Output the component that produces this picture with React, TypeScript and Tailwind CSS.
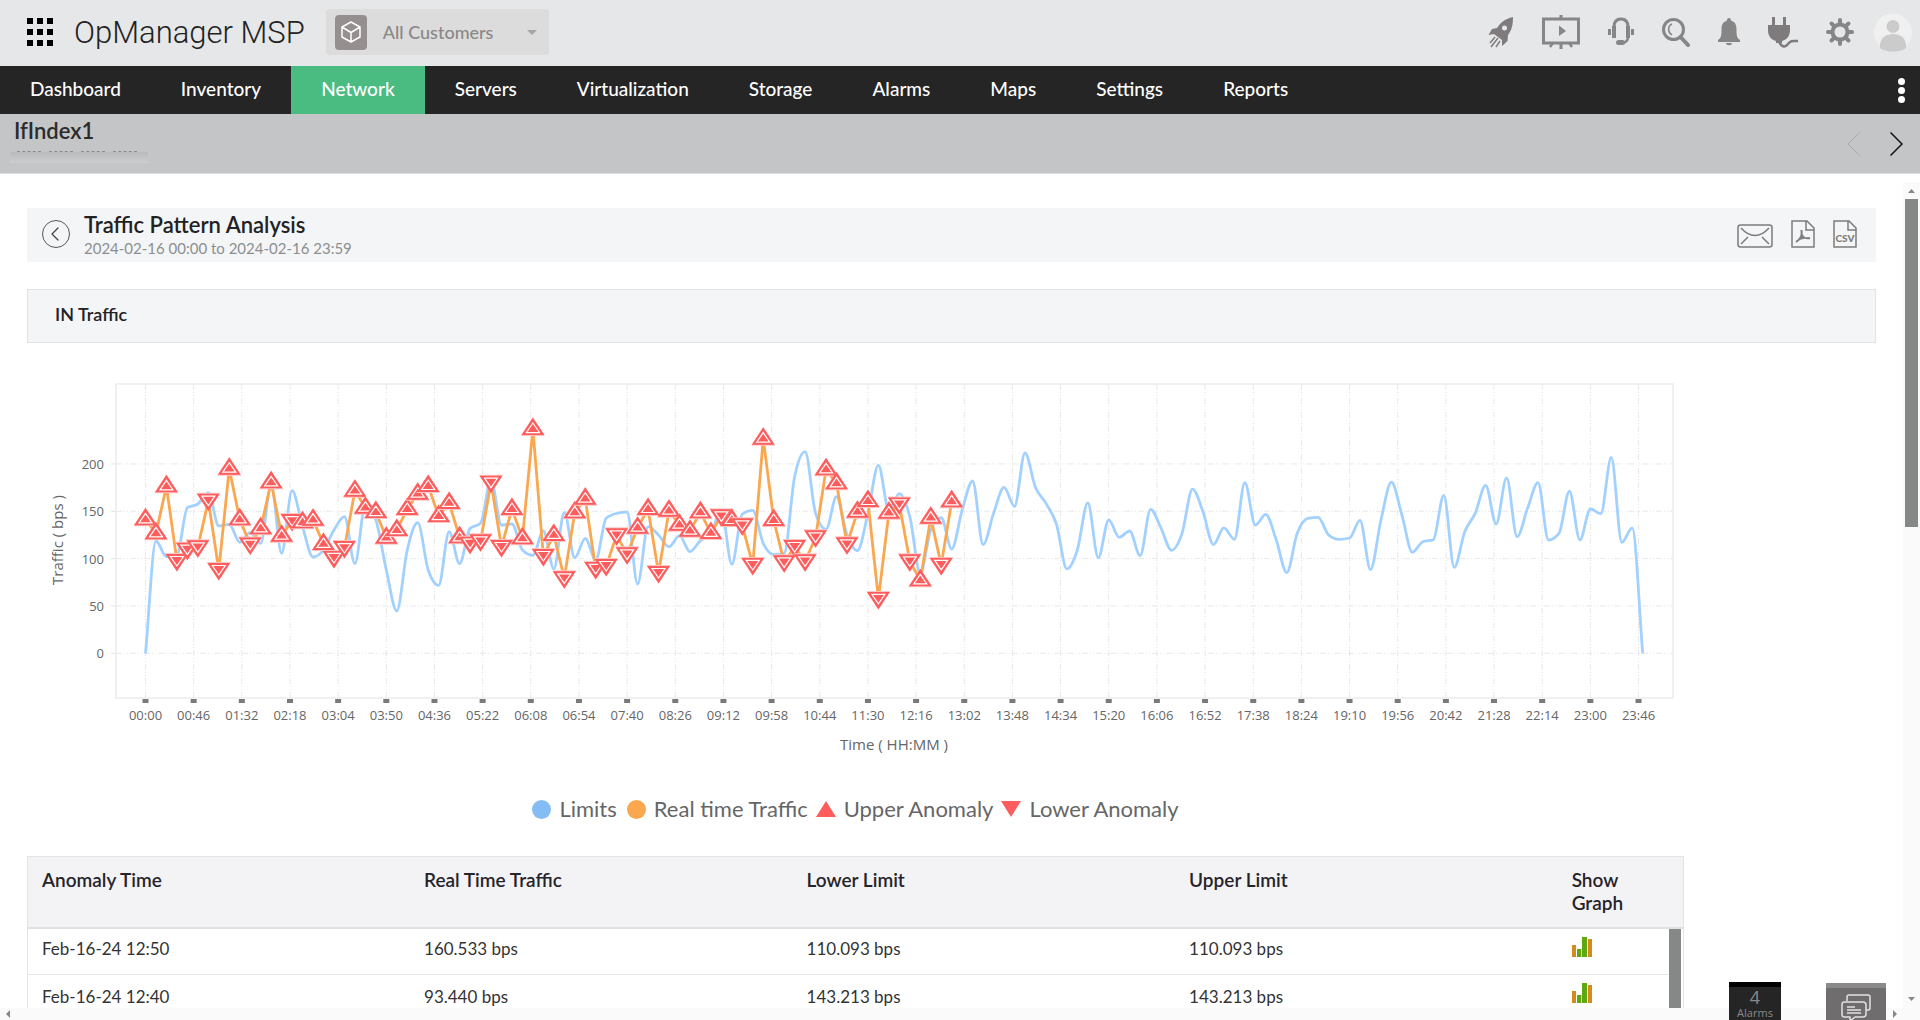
import { ChevronLeft } from "lucide-react";

const TABS = ["Dashboard", "Inventory", "Network", "Servers", "Virtualization", "Storage", "Alarms", "Maps", "Settings", "Reports"];

// one sample every 10 minutes, starting at 00:00
const LIMITS = [
  0, 118.6, 102.1, 103.8, 153.8, 157.7, 169.7, 134.5, 136.2, 117.2, 127.4, 116.2, 177.8, 105.6, 171.8, 133.8,
  101.7, 109.1, 130.2, 144.3, 94.7, 156.6, 140.8, 88, 44.7, 109.1, 138, 88, 71.8, 128.5, 94.7, 132,
  137.3, 183, 135.5, 136.6, 109.1, 103.5, 129.2, 89.1, 148.9, 101, 121.4, 98.6, 142.6, 147.8, 149.2, 73.2,
  133.8, 125, 112.6, 124.3, 107.4, 119, 126.7, 151.4, 94, 147.1, 151, 116.2, 104.5, 105.6, 186.6, 213,
  147.8, 131, 165.4, 125, 108.4, 147.8, 198.5, 151.4, 168.6, 144.3, 84.5, 130.2, 143.2, 110.1, 151.4, 182,
  114.8, 147.8, 175.3, 155.2, 211.6, 175.3, 158.4, 136.6, 89.1, 109.1, 158.8, 101, 140.8, 122.5, 129.2, 103.1,
  152.1, 132, 108.8, 126.7, 173.5, 149.6, 114.8, 132.4, 120.4, 180.2, 135.5, 146.8, 119.7, 85.2, 126.7, 142.6,
  143.6, 125, 120.4, 121.8, 140.4, 88.4, 140.8, 180.9, 146.1, 106.7, 117.9, 120, 166.8, 90.8, 128.5, 147.8,
  177.4, 136.6, 185.2, 123.2, 153.1, 180.2, 119.7, 126.7, 171.4, 119.7, 152.4, 147.5, 207, 117.2, 132.4, 0,
];

const TRAFFIC = [
  141.5, 126.7, 176.4, 97.5, 109.5, 111.9, 161.2, 88, 195, 141.5, 114.8, 132, 180.6, 124.3, 139.7, 138.3,
  141.2, 115.5, 100.7, 111.2, 171.8, 153.8, 149.2, 122.1, 130.2, 152.4, 168.6, 176.7, 145, 158.8, 122.5, 115.8,
  118.3, 180.2, 112.3, 152.4, 121.4, 236.9, 102.8, 125, 79.2, 148.9, 163.3, 89.1, 92.2, 124.6, 104.5, 132.7,
  152.4, 84.8, 150.7, 135.9, 129.5, 148.9, 127.1, 144.7, 140.8, 135.2, 93.3, 226.7, 140.8, 96.1, 112.3, 97.2,
  122.5, 194.3, 179.5, 115.1, 149.6, 160.9, 57.4, 148.5, 157.3, 97.2, 77.1, 143.3, 93.4, 160.5,
];

// U = upper anomaly, L = lower anomaly, same order as TRAFFIC
const KINDS = "UUULLLLLUULUUULUUULLUUUUUUUUUUULLLLUUULULUULLLLUULUUUUULULLUULLLLUULUULULLUULU";

const ROWS = [
  { time: "Feb-16-24 12:50", traffic: "160.533 bps", lower: "110.093 bps", upper: "110.093 bps" },
  { time: "Feb-16-24 12:40", traffic: "93.440 bps", lower: "143.213 bps", upper: "143.213 bps" },
];

const PLOT = { left: 89, right: 1646, top: 14, bottom: 328 };
const px = (i: number) => 118.5 + i * 10.47;
const py = (v: number) => 283.3 - v * 0.9467;

// monotone cubic through all points so the peaks stay on the samples
function smoothPath(values: number[]) {
  const n = values.length;
  const h = px(1) - px(0);
  const ys = values.map(py);
  const d = ys.slice(1).map((y, i) => (y - ys[i]) / h);
  const m = ys.map((_, i) => {
    if (i === 0) return d[0];
    if (i === n - 1) return d[n - 2];
    const a = d[i - 1], b = d[i];
    if (a * b <= 0) return 0;
    return Math.sign(a) * Math.min(Math.abs(a), Math.abs(b), 0.5 * Math.abs((a + b) / 2)) * 2;
  });
  let path = `M${px(0)},${ys[0]}`;
  for (let i = 0; i < n - 1; i++) {
    path += `C${px(i) + h / 3},${ys[i] + (m[i] * h) / 3} ${px(i + 1) - h / 3},${ys[i + 1] - (m[i + 1] * h) / 3} ${px(i + 1)},${ys[i + 1]}`;
  }
  return path;
}

function timeLabel(minutes: number) {
  const hh = String(Math.floor(minutes / 60)).padStart(2, "0");
  const mm = String(minutes % 60).padStart(2, "0");
  return `${hh}:${mm}`;
}

function Marker({ x, y, kind }: { x: number; y: number; kind: string }) {
  return (
    <g transform={kind === "L" ? `translate(${x} ${y - 1}) scale(1 -1)` : `translate(${x} ${y})`}>
      <path d="M0 -11.500 L12 7 H-12 Z" fill="#ffc4c4" />
      <path d="M0 -11.500 L11.500 6 H-11.500 Z" fill="#ff5d5d" />
      <path d="M0 -6 L6.500 3.500 H-6.500 Z" fill="none" stroke="#fff" strokeWidth="1.200" />
    </g>
  );
}

function TrafficChart() {
  const ticks = Array.from({ length: 32 }, (_, i) => i * 46);
  return (
    <svg viewBox="0 0 1657 400" className="block h-auto w-full font-['Open_Sans',sans-serif]" role="img" aria-label="IN Traffic">
      {ticks.map(t => (
        <line key={t} x1={px(t / 10)} x2={px(t / 10)} y1={PLOT.top} y2={PLOT.bottom} stroke="#e8e8e8" strokeDasharray="6 2 1 2 1 2" />
      ))}
      {[0, 50, 100, 150, 200].map(v => (
        <g key={v}>
          <line x1={PLOT.left} x2={PLOT.right} y1={py(v)} y2={py(v)} stroke="#e8e8e8" strokeDasharray="6 2 1 2 1 2" />
          <line x1={PLOT.left - 5} x2={PLOT.left} y1={py(v)} y2={py(v)} stroke="#e2e2e2" />
          <text x={77} y={py(v) + 5} textAnchor="end" fontSize="13" fill="#666">{v}</text>
        </g>
      ))}
      <rect x={PLOT.left} y={PLOT.top} width={PLOT.right - PLOT.left} height={PLOT.bottom - PLOT.top} fill="none" stroke="#ececec" strokeWidth="1.500" />
      {ticks.map(t => (
        <g key={t}>
          <rect x={px(t / 10) - 3} y={329} width="6" height="4" fill="#7d7979" />
          <text x={px(t / 10)} y={350} textAnchor="middle" fontSize="13" fill="#666">{timeLabel(t)}</text>
        </g>
      ))}
      <text x={867} y={380} textAnchor="middle" fontSize="15" fill="#666">Time ( HH:MM )</text>
      <text transform="translate(36 170) rotate(-90)" textAnchor="middle" fontSize="15" fill="#666">Traffic ( bps )</text>

      <path d={smoothPath(LIMITS)} fill="none" stroke="#a2d1ff" strokeWidth="2.800" />
      <polyline points={TRAFFIC.map((v, i) => `${px(i)},${py(v)}`).join(" ")} fill="none" stroke="#faa74f" strokeWidth="2.800" />
      {TRAFFIC.map((v, i) => <Marker key={i} x={px(i)} y={py(v)} kind={KINDS[i]} />)}
    </svg>
  );
}

function HeaderIcons() {
  return (
    <div className="ml-auto flex items-center gap-7 text-[#868687]">
      <button aria-label="Quick start">
        <svg width="26" height="32" viewBox="0 0 26 32" fill="none">
          <path d="M25 1 C17 3 13 6 9 12 L4 13 L0.500 19 L6 18 L14 24 L14 30 L19.500 25 L20 19 C24 14 25 8 25 1Z" fill="#7f7a7c" />
          <circle cx="16.500" cy="12" r="2.500" fill="#e6e7e9" />
          <path d="M7 21 L2 27 M10 22 L3 31 M12 25 L8 31" stroke="#7f7a7c" strokeWidth="1.500" />
        </svg>
      </button>
      <button aria-label="NOC view">
        <svg width="38" height="34" viewBox="0 0 38 34" fill="none" stroke="currentColor">
          <rect x="1.500" y="4" width="35" height="24" strokeWidth="3" />
          <path d="M19 0 V4 M19 28 V34" strokeWidth="3" />
          <path d="M11 28 L8 32 M27 28 L30 32" strokeWidth="2.500" />
          <path d="M17 10.500 L24 16 L17 21 Z" fill="currentColor" stroke="none" />
        </svg>
      </button>
      <button aria-label="Support">
        <svg width="26" height="30" viewBox="0 0 26 30" fill="none" stroke="currentColor">
          <path d="M6 20 V10 C6 4 9 2 13 2 C17 2 20 4 20 10 V20" strokeWidth="3" />
          <path d="M6 9 V21 M20 9 V21" strokeWidth="4" />
          <path d="M1.500 12 V18 M24.500 12 V18" strokeWidth="3" />
          <path d="M20 20 C20 25 17 26 13 26" strokeWidth="2.500" />
          <rect x="8" y="23" width="9" height="5" rx="2.500" fill="currentColor" stroke="none" />
        </svg>
      </button>
      <button aria-label="Search">
        <svg width="28" height="29" viewBox="0 0 28 29" fill="none" stroke="currentColor">
          <circle cx="11.500" cy="11.500" r="10" strokeWidth="3" />
          <path d="M10 6 C5.500 8 5.500 14 10 17" strokeWidth="1.500" />
          <path d="M18.500 19 L26 27" strokeWidth="4" strokeLinecap="round" />
        </svg>
      </button>
      <button aria-label="Alarms">
        <svg width="22" height="28" viewBox="0 0 22 28" fill="currentColor">
          <path d="M11 0 C12.500 0 13 1 13 2.500 C17.500 4 18.500 7 18.500 12 C18.500 18 19 20 22 22 V24 H0 V22 C3 20 3.500 18 3.500 12 C3.500 7 4.500 4 9 2.500 C9 1 9.500 0 11 0Z" />
          <path d="M8 25 H14 C14 28 8 28 8 25Z" />
        </svg>
      </button>
      <button aria-label="Integrations">
        <svg width="30" height="31" viewBox="0 0 30 31" fill="none">
          <path d="M5.500 0 V9 M16.500 0 V9" stroke="#7f7a7c" strokeWidth="3" />
          <path d="M0 8 H22 V13 C22 20 18 23 14 24 V26 H8 V24 C4 23 0 20 0 13Z" fill="#7f7a7c" />
          <path d="M11 24 C13 30 17 31 20 27 C23 23 25 24 30 24" stroke="#7f7a7c" strokeWidth="2.500" />
        </svg>
      </button>
      <button aria-label="Settings">
        <svg width="28" height="28" viewBox="-14 -14 28 28" fill="none" stroke="currentColor">
          <circle r="7.500" strokeWidth="4" />
          {[0, 45, 90, 135, 180, 225, 270, 315].map(a => (
            <path key={a} d="M0 -9 V-12" strokeWidth="4" strokeLinecap="round" transform={`rotate(${a})`} />
          ))}
        </svg>
      </button>
      <button aria-label="Profile" className="-ml-2">
        <svg width="38" height="39" viewBox="0 0 38 39">
          <circle cx="19" cy="19.500" r="19" fill="#f0f0f0" />
          <circle cx="19" cy="13.500" r="6.500" fill="#cbcbcb" />
          <path d="M6 35 C5 26 11 21 19 21 C27 21 33 26 32 35 C25 40 13 40 6 35Z" fill="#cbcbcb" />
        </svg>
      </button>
    </div>
  );
}

function Header() {
  return (
    <header className="flex h-[66px] shrink-0 items-center bg-[#e6e7e9] pb-0.5 pl-[27px] pr-2">
      <button aria-label="Apps" className="grid grid-cols-3 gap-x-1 gap-y-[5px]">
        {Array.from({ length: 9 }, (_, i) => <span key={i} className="size-[6px] bg-black" />)}
      </button>
      <h1 className="ml-[21px] whitespace-nowrap font-['Roboto_Slab',Roboto,sans-serif] text-[31px] font-light leading-none text-[#222]">
        OpManager MSP
      </h1>
      <div className="ml-[21px] flex h-[46px] w-[223px] items-center rounded bg-[#dcdcdc] pl-[9px] pr-3 text-[18px] font-medium text-[#8a8787]">
        <span className="flex h-[35px] w-8 items-center justify-center rounded bg-[#958f90]">
          <svg width="20" height="22" viewBox="0 0 20 22" fill="none" stroke="#fff" strokeWidth="1.500" strokeLinejoin="round">
            <path d="M10 1 L19 6 V16 L10 21 L1 16 V6 Z M1 6 L10 11.500 L19 6 M10 11.500 V21" />
          </svg>
        </span>
        <select aria-label="Customer" className="ml-4 flex-1 appearance-none bg-transparent outline-none">
          <option>All Customers</option>
        </select>
        <svg width="10" height="5" viewBox="0 0 10 5" fill="#a5a5a5"><path d="M0 0 H10 L5 5Z" /></svg>
      </div>
      <HeaderIcons />
    </header>
  );
}

function ReportIcons() {
  return (
    <div className="ml-auto flex items-center gap-[18px] pb-0.5 pr-[19px] text-[#7c7c7c]">
      <button aria-label="Mail report" className="pt-1">
        <svg width="36" height="24" viewBox="0 0 36 24" fill="none" stroke="currentColor" strokeWidth="1.500">
          <rect x="1" y="1" width="34" height="22" rx="2.500" />
          <path d="M4 4 C13 14 23 14 32 4 M4 20 L11 13 M32 20 L25 13" />
        </svg>
      </button>
      <button aria-label="Export as PDF">
        <svg width="24" height="28" viewBox="0 0 24 28" fill="none" stroke="currentColor" strokeWidth="1.500">
          <path d="M1 1 H16 L23 8 V27 H1 Z M15 1 V10 H23" />
          <path d="M10.500 10 C11 15 11 18 5 22 M10.500 14 C12 18 14 19 19 18 M8 19 L14 17.500" strokeWidth="2" />
        </svg>
      </button>
      <button aria-label="Export as CSV">
        <svg width="24" height="28" viewBox="0 0 24 28" fill="none" stroke="currentColor" strokeWidth="1.500">
          <path d="M1 1 H16 L23 8 V27 H1 Z M15 1 V10 H23" />
          <text x="12" y="22" textAnchor="middle" fontSize="10" fontWeight="900" fill="currentColor" stroke="none">CSV</text>
        </svg>
      </button>
    </div>
  );
}

function BarsIcon() {
  return (
    <svg width="20" height="20" viewBox="0 0 20 20">
      <path d="M0 8 H4 V20 H0Z M16 2 H20 V20 H16Z" fill="#d48a1c" />
      <path d="M5 12 H9 V20 H5Z M10 0 H15 V20 H10Z" fill="#5fa80f" />
      <path d="M9 12 H10 V20 H9Z" fill="#b7dcc6" />
    </svg>
  );
}

function Legend() {
  return (
    <ul className="flex items-center justify-center text-[22px] leading-7 text-[#666]">
      <li className="flex items-center"><span className="mr-2 size-[19px] rounded-full bg-[#85bcf3]" />Limits</li>
      <li className="ml-[10px] flex items-center"><span className="mr-2 size-[19px] rounded-full bg-[#faa74f]" />Real time Traffic</li>
      <li className="ml-2 flex items-center">
        <svg className="mr-2" width="20" height="16" viewBox="0 0 20 16" fill="#ff5d5d"><path d="M10 0 L20 16 H0Z" /></svg>
        Upper Anomaly
      </li>
      <li className="ml-2 flex items-center">
        <svg className="mr-2" width="20" height="16" viewBox="0 0 20 16" fill="#ff5d5d"><path d="M10 16 L20 0 H0Z" /></svg>
        Lower Anomaly
      </li>
    </ul>
  );
}

function AnomalyTable() {
  return (
    <table className="w-full table-fixed border-collapse border border-[#e4e4e7] text-left leading-[23px]">
      <colgroup>
        <col className="w-[23.1%]" />
        <col className="w-[23.1%]" />
        <col className="w-[23.1%]" />
        <col className="w-[23.1%]" />
        <col />
        <col className="w-4" />
      </colgroup>
      <thead className="border-b-2 border-[#e0e0e2] bg-[#f3f3f6] text-[19px] text-[#262329]">
        <tr className="h-[71px] align-top">
          {["Anomaly Time", "Real Time Traffic", "Lower Limit", "Upper Limit"].map(h => (
            <th key={h} className="px-[14px] pt-[11px] font-semibold">{h}</th>
          ))}
          <th colSpan={2} className="px-[14px] pt-[11px] font-semibold">Show<br />Graph</th>
        </tr>
      </thead>
      <tbody className="text-[17px] text-[#333]">
        {ROWS.map((r, i) => (
          <tr key={r.time} className="h-[46px] border-b border-[#e6e6e8] align-top">
            {[r.time, r.traffic, r.lower, r.upper].map((cell, c) => (
              <td key={c} className={i === 0 ? "px-[14px] pt-2" : "px-[14px] pt-[10px]"}>{cell}</td>
            ))}
            <td className="px-[14px] pt-2">
              <button aria-label={`Show graph for ${r.time}`} className="block"><BarsIcon /></button>
            </td>
            {i === 0 && (
              <td rowSpan={ROWS.length} className="h-px p-0 pl-px pr-[2px]"><div className="h-full min-h-[92px] bg-[#868887]" /></td>
            )}
          </tr>
        ))}
      </tbody>
    </table>
  );
}

export default function App() {
  return (
    <div className="relative flex h-screen flex-col overflow-hidden bg-white font-['Lato',sans-serif]">
      <Header />

      <nav className="flex h-12 shrink-0 items-stretch bg-[#252525] text-[19px] font-medium text-white">
        {TABS.map(t => (
          <a key={t} href="#" className={`flex items-center px-[30px] pb-0.5 ${t === "Network" ? "bg-[#4abc82]" : ""}`}>{t}</a>
        ))}
        <button aria-label="More" className="ml-auto flex flex-col items-center justify-center gap-[2px] pr-[15px]">
          <span className="size-[7px] rounded-full bg-white" />
          <span className="size-[7px] rounded-full bg-white" />
          <span className="size-[7px] rounded-full bg-white" />
        </button>
      </nav>

      <div className="flex h-[60px] shrink-0 items-center justify-between border-b border-[#dcdcdc] bg-[#c4c5c7]">
        <div className="h-full pl-[10px]">
          <h2 className="pl-1 pt-[3px] text-[22px] font-semibold leading-7 text-[#2b2b2b]">IfIndex1</h2>
          <div className="mt-[6px] flex gap-2 pl-[7px]">
            {[0, 1, 2, 3].map(n => <span key={n} className="w-6 border-t border-dashed border-[#8b8b8c]" />)}
          </div>
          <div className="h-[11px] w-[138px] bg-linear-to-b from-[#b9babb] to-[#cdcecf]" />
        </div>
        <div className="flex gap-[30px] pr-[17px]">
          <button aria-label="Previous">
            <svg width="13" height="24" viewBox="0 0 13 24" fill="none" stroke="#aaa" strokeWidth="1"><path d="M12.500 0.500 L1 12 L12.500 23.500" /></svg>
          </button>
          <button aria-label="Next">
            <svg width="13" height="24" viewBox="0 0 13 24" fill="none" stroke="#111" strokeWidth="1.500"><path d="M0.500 0.500 L12 12 L0.500 23.500" /></svg>
          </button>
        </div>
      </div>

      <div className="flex min-h-0 flex-1">
        <main className="min-w-0 flex-1 overflow-hidden px-[27px] pt-[34px]">
          <section className="flex h-[54px] items-center bg-[#f4f5f7] pl-[15px]">
            <button aria-label="Back" className="mb-0.5 flex size-7 items-center justify-center rounded-full border border-[#555] pr-0.5 text-[#444]">
              <ChevronLeft size={24} strokeWidth={1.25} />
            </button>
            <div className="ml-[14px]">
              <h3 className="text-[22px] font-semibold leading-[26px] text-[#222]">Traffic Pattern Analysis</h3>
              <p className="text-[15px] leading-5 text-[#8c8f8f]">2024-02-16 00:00 to 2024-02-16 23:59</p>
            </div>
            <ReportIcons />
          </section>

          <h4 className="mt-[27px] h-[54px] border border-[#e1e2e3] bg-[#f4f5f7] pl-[27px] pt-[11px] text-[18px] font-semibold leading-[26px] text-[#222]">IN Traffic</h4>

          <div className="mr-48 mt-[27px]">
            <TrafficChart />
            <div className="mb-[33px] mt-[25px]"><Legend /></div>
            <AnomalyTable />
          </div>
        </main>

        <div className="mt-2 flex w-[17px] flex-col items-center bg-[#fafafa]">
          <svg className="mb-[6px] mt-[7px] shrink-0" width="7" height="4" viewBox="0 0 7 4" fill="#868887"><path d="M0 4 H7 L3.500 0Z" /></svg>
          <div className="h-[328px] w-[13px] bg-[#868887]" />
          <svg className="mb-[7px] mt-auto" width="7" height="4" viewBox="0 0 7 4" fill="#868887"><path d="M0 0 H7 L3.500 4Z" /></svg>
        </div>
      </div>

      <div className="flex h-3 shrink-0 items-center justify-between bg-[#fafafa] pl-[6px] pr-[23px]">
        <svg width="4" height="8" viewBox="0 0 4 8" fill="#868887"><path d="M4 0 V8 L0 4Z" /></svg>
        <svg width="4" height="8" viewBox="0 0 4 8" fill="#868887"><path d="M0 0 V8 L4 4Z" /></svg>
      </div>

      {/* docked widgets over the page */}
      <button className="absolute bottom-0 right-[139px] flex h-[38px] w-[52px] flex-col items-center border-t-[5px] border-black bg-[#252525] font-['Open_Sans',sans-serif] text-[#8a8a8a]">
        <span className="text-[18px] leading-5">4</span>
        <span className="text-[11px] leading-3">Alarms</span>
      </button>
      <button aria-label="Chat" className="absolute bottom-0 right-[34px] flex h-[37px] w-[60px] justify-center border-t-[5px] border-[#8b8a8a] bg-[#6f6d6d] pt-[6px]">
        <svg width="30" height="28" viewBox="0 0 30 28" fill="none" stroke="#e2e2e2" strokeWidth="1.500" strokeLinejoin="round">
          <path d="M6 7 V3 Q6 1 8 1 H27 Q29 1 29 3 V14 Q29 16 27 16 H25" />
          <path d="M3 8 H22 Q25 8 25 11 V20 Q25 23 22 23 H14 L9 27 V23 H3 Q1 23 1 20 V11 Q1 8 3 8Z" />
          <path d="M6 13 H14 M6 16 H20 M6 19 H20" />
        </svg>
      </button>
    </div>
  );
}
